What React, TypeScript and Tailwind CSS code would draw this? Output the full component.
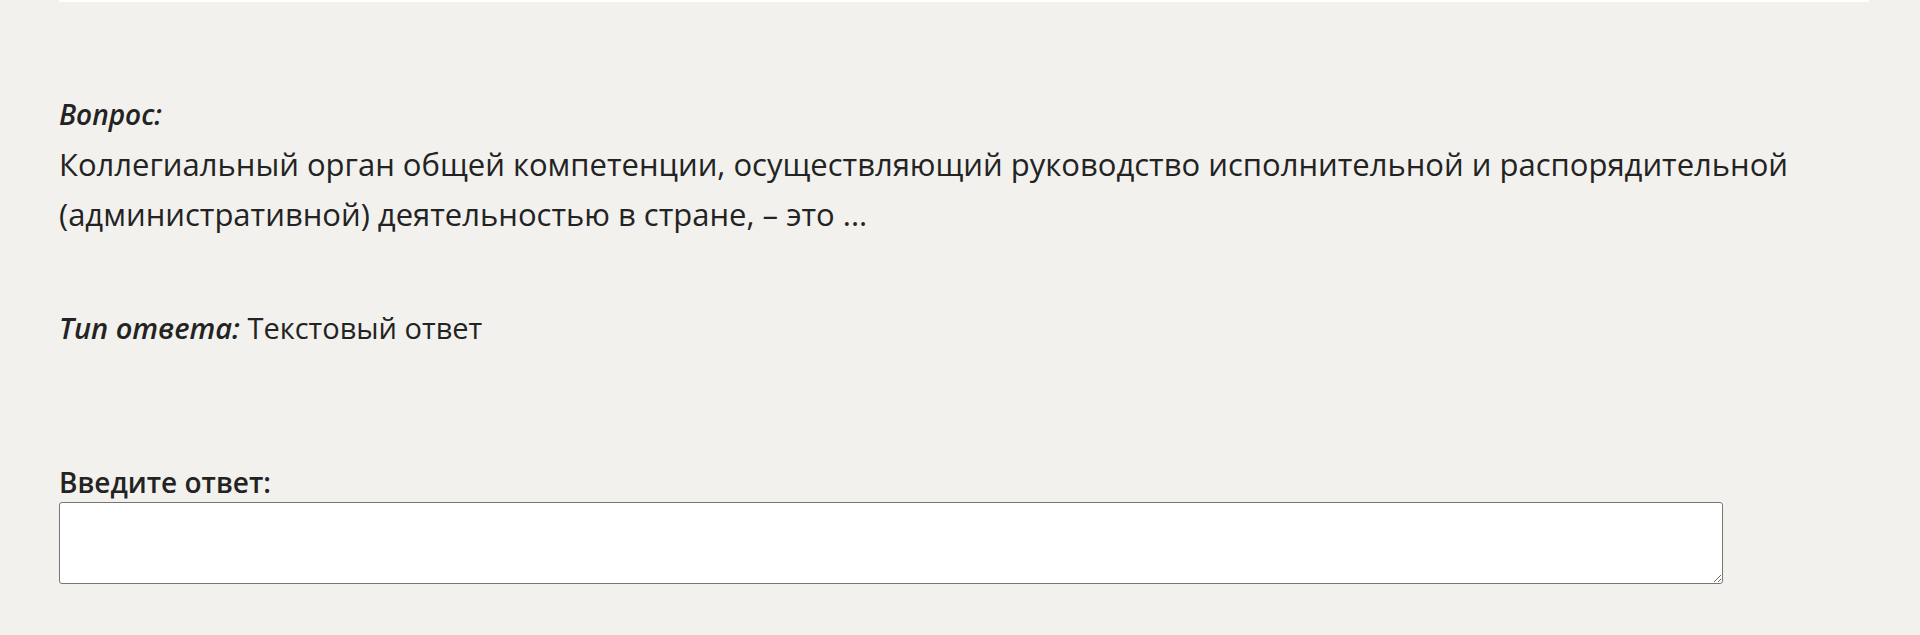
export default function App() {
  return (
    <div className="min-h-[635px] bg-[#f2f1ed] text-[#232323] font-['Open_Sans','Noto_Sans',sans-serif]">
      <div className="ml-[59px] mr-[51px] h-[2px] bg-white" />
      <div className="pl-[59px] pr-[51px] pt-[87px]">
        <div className="text-[28px] leading-[50px] font-semibold italic">Вопрос:</div>
        <p className="text-[31px] leading-[50px]">
          Коллегиальный орган общей компетенции, осуществляющий руководство исполнительной и распорядительной
          (административной) деятельностью в стране, – это ...
        </p>
        <div className="mt-[64px] text-[29px] leading-[50px]">
          <span className="font-semibold italic">Тип ответа:</span> Текстовый ответ
        </div>
        <label className="mt-[111px] block text-[28px] leading-[36px] font-semibold">Введите ответ:</label>
        <textarea className="mt-[2px] block h-[82px] w-[1664px] rounded-[3px] border border-[#767676] bg-white px-2 py-1 text-[24px]" />
      </div>
    </div>
  )
}
